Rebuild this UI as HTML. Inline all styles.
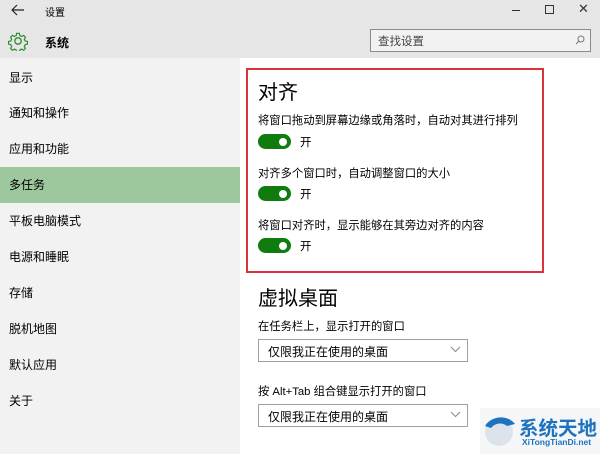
<!DOCTYPE html>
<html><head><meta charset="utf-8"><style>
*{margin:0;padding:0;box-sizing:border-box}
body{width:600px;height:454px;overflow:hidden;background:#fff;font-family:"Liberation Sans","Noto Sans CJK SC",sans-serif;color:#000;position:relative;font-size:12px}
.a{position:absolute;white-space:nowrap}
.hdr{position:absolute;left:0;top:0;width:600px;height:58px;background:#e6e6e6}
.side{position:absolute;left:0;top:58px;width:240px;height:396px;background:#f2f2f2}
.sel{position:absolute;left:0;top:167px;width:240px;height:36px;background:#9dc79d}
.si{left:9px;font-size:12px;line-height:14px}
.tg{position:absolute;left:258px;width:33px;height:15px;border-radius:8px;background:#107c10}
.tg::after{content:"";position:absolute;right:4px;top:3.5px;width:8px;height:8px;border-radius:50%;background:#fff}
.dd{position:absolute;left:258px;width:210px;height:23px;border:1.5px solid #a0a0a0;background:#fff}
.dd span{position:absolute;left:9px;top:3px;font-size:12px}
.dd svg{position:absolute;right:6px;top:6px}
.lb{left:258px;font-size:11.3px}
</style></head><body>
<div class="hdr"></div>
<div class="side"></div>
<div class="sel"></div>
<svg class="a" style="left:11px;top:4px" width="14" height="12" viewBox="0 0 14 12"><path d="M13 6H2M6 1L1 6l5 5" fill="none" stroke="#222" stroke-width="1.2"/></svg>
<div class="a" style="left:45px;top:4px;font-size:10px">设置</div>
<div class="a" style="left:512px;top:10px;width:8px;height:1px;background:#333"></div>
<div class="a" style="left:545px;top:5px;width:9px;height:9px;border:1px solid #333"></div>
<div class="a" style="left:578px;top:1px;font-size:13px;color:#333">✕</div>
<svg class="a" style="left:8px;top:31px" width="20" height="20" viewBox="0 0 20 20"><g fill="none" stroke="#2d8a2d" stroke-width="1.3"><circle cx="10" cy="10" r="3.2"/><path d="M8.5 1.5h3l.5 2.5 2 1 2.2-1.3 2.1 2.1-1.3 2.2 1 2 2.5.5v3l-2.5.5-1 2 1.3 2.2-2.1 2.1-2.2-1.3-2 1-.5 2.5h-3l-.5-2.5-2-1-2.2 1.3-2.1-2.1 1.3-2.2-1-2-2.5-.5v-3l2.5-.5 1-2-1.3-2.2 2.1-2.1 2.2 1.3 2-1z" transform="scale(.9) translate(1.1 1.1)"/></g></svg>
<div class="a" style="left:45px;top:34px;font-size:12px;font-weight:bold">系统</div>
<div class="a" style="left:370px;top:29px;width:221px;height:23px;border:1.5px solid #8a8a8a;background:#f2f2f2"></div>
<div class="a" style="left:378px;top:33px;font-size:11.5px;color:#444">查找设置</div>
<svg class="a" style="left:575px;top:35px" width="10" height="10" viewBox="0 0 10 10"><circle cx="6" cy="4" r="3" fill="none" stroke="#777"/><path d="M4 6L1 9" stroke="#777"/></svg>
<div class="a si" style="top:71px">显示</div>
<div class="a si" style="top:106px">通知和操作</div>
<div class="a si" style="top:142px">应用和功能</div>
<div class="a si" style="top:178px">多任务</div>
<div class="a si" style="top:214px">平板电脑模式</div>
<div class="a si" style="top:250px">电源和睡眠</div>
<div class="a si" style="top:286px">存储</div>
<div class="a si" style="top:322px">脱机地图</div>
<div class="a si" style="top:358px">默认应用</div>
<div class="a si" style="top:394px">关于</div>
<div class="a" style="left:246px;top:68px;width:298px;height:205px;border:2px solid #d9343b"></div>
<div class="a" style="left:258px;top:76px;font-size:20px">对齐</div>
<div class="a lb" style="top:112px">将窗口拖动到屏幕边缘或角落时，自动对其进行排列</div>
<div class="tg" style="top:134px"></div><div class="a" style="left:300px;top:134px;font-size:11.5px">开</div>
<div class="a lb" style="top:165px">对齐多个窗口时，自动调整窗口的大小</div>
<div class="tg" style="top:186px"></div><div class="a" style="left:300px;top:186px;font-size:11.5px">开</div>
<div class="a lb" style="top:217px">将窗口对齐时，显示能够在其旁边对齐的内容</div>
<div class="tg" style="top:238px"></div><div class="a" style="left:300px;top:238px;font-size:11.5px">开</div>
<div class="a" style="left:258px;top:282px;font-size:20px">虚拟桌面</div>
<div class="a lb" style="top:318px">在任务栏上，显示打开的窗口</div>
<div class="dd" style="top:339px"><span>仅限我正在使用的桌面</span><svg width="11" height="7" viewBox="0 0 11 7"><path d="M1 1l4.5 4.5L10 1" fill="none" stroke="#888"/></svg></div>
<div class="a lb" style="top:383px">按 Alt+Tab 组合键显示打开的窗口</div>
<div class="dd" style="top:404px"><span>仅限我正在使用的桌面</span><svg width="11" height="7" viewBox="0 0 11 7"><path d="M1 1l4.5 4.5L10 1" fill="none" stroke="#888"/></svg></div>
<div class="a" style="left:480px;top:408px;width:120px;height:46px;background:#f4f6f8"></div>
<svg class="a" style="left:481px;top:410px" width="36" height="40" viewBox="0 0 36 40"><circle cx="18" cy="22" r="14" fill="#dde3ea"/><path d="M4 16c6-10 22-12 30-2l-8 2c-5-4-12-3-16 2z" fill="#1e73be"/></svg>
<div class="a" style="left:519px;top:412px;font-size:19.5px;font-weight:bold;color:#1e73be">系统天地</div>
<div class="a" style="left:522px;top:437px;font-size:8.5px;font-weight:bold;color:#1e73be">XiTongTianDi.net</div>
</body></html>
